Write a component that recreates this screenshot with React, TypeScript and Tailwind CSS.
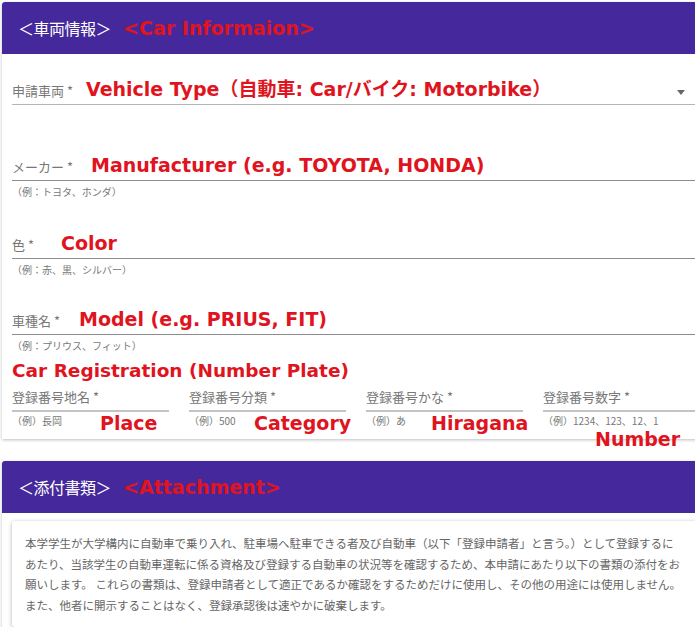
const jp = "font-['Meiryo','Noto_Sans_CJK_JP',sans-serif]";
const red = "font-['DejaVu_Sans','Noto_Sans_CJK_JP',sans-serif] font-bold text-[#e0141e]";

function Field({
  label,
  note,
  hint,
  noteGap,
  select,
}: {
  label: string;
  note: string;
  hint?: string;
  noteGap: string;
  select?: boolean;
}) {
  return (
    <div>
      <div
        className={`h-[26px] flex items-end pb-[3px] border-b ${
          select ? "border-[#b4b4b4]" : "border-[#8c8c8c]"
        }`}
      >
        <span className="text-[13px] leading-[20px] text-[#777]">{label}</span>
        <span className={`${red} text-[19px] leading-[24px] ${noteGap}`}>{note}</span>
        {select && (
          <span className="ml-auto mr-[12px] mb-[6px] w-0 h-0 border-l-[4px] border-r-[4px] border-t-[5px] border-l-transparent border-r-transparent border-t-[#666]" />
        )}
      </div>
      {hint && <div className="mt-[4px] text-[10px] leading-[14px] text-[#777]">{hint}</div>}
    </div>
  );
}

function PlateField({
  label,
  hint,
  note,
  hintWidth,
  last,
}: {
  label: string;
  hint: string;
  note: string;
  hintWidth?: string;
  last?: boolean;
}) {
  return (
    <div className="w-[157px] shrink-0">
      <div className="h-[26px] flex items-end pb-[3px] border-b-2 border-[#c4c4c4]">
        <span className="text-[13px] leading-[20px] text-[#777]">{label}</span>
      </div>
      {last ? (
        <div className="h-[18px]">
          <div className="text-[10px] leading-[18px] text-[#777]">{hint}</div>
          <div className={`${red} text-[19px] leading-[18px] ml-[52px]`}>{note}</div>
        </div>
      ) : (
        <div className="h-[18px] flex items-center">
          <span className={`text-[10px] leading-[18px] text-[#777] shrink-0 ${hintWidth}`}>{hint}</span>
          <span className={`${red} text-[19px] leading-[22px] mt-[4px] whitespace-nowrap`}>{note}</span>
        </div>
      )}
    </div>
  );
}

function Header({ jpTitle, enTitle }: { jpTitle: string; enTitle: string }) {
  return (
    <div className="h-[52px] bg-[#45289b] rounded-tl-[3px] flex items-center pl-[16px]">
      <span className="text-white text-[16px] tracking-[-0.5px]">{jpTitle}</span>
      <span className={`${red} text-[19px] ml-[12px]`}>{enTitle}</span>
    </div>
  );
}

export default function App() {
  return (
    <div className={`w-[695px] h-[627px] overflow-hidden bg-white ${jp}`}>
      <div className="w-[720px] pt-[2px] pl-[2px]">
        <section className="relative bg-white shadow-[0_1px_3px_rgba(0,0,0,0.25)]">
          <Header jpTitle="＜車両情報＞" enTitle="<Car Informaion>" />
          <div className="pl-[10px] pr-[23px] pt-[25px] pb-[9px]">
            <Field
              select
              label="申請車両 *"
              note="Vehicle Type（自動車: Car/バイク: Motorbike）"
              noteGap="ml-[13px]"
            />
            <div className="mt-[50px]">
              <Field
                label="メーカー *"
                note="Manufacturer (e.g. TOYOTA, HONDA)"
                hint="（例：トヨタ、ホンダ）"
                noteGap="ml-[18px]"
              />
            </div>
            <div className="mt-[34px]">
              <Field label="色 *" note="Color" hint="（例：赤、黒、シルバー）" noteGap="ml-[27px]" />
            </div>
            <div className="mt-[32px]">
              <Field
                label="車種名 *"
                note="Model (e.g. PRIUS, FIT)"
                hint="（例：プリウス、フィット）"
                noteGap="ml-[19px]"
              />
            </div>
            <div className={`${red} text-[18.5px] leading-[24px] mt-[6px]`}>Car Registration (Number Plate)</div>
            <div className="flex gap-[20px] mt-[3px]">
              <PlateField label="登録番号地名 *" hint="（例）長岡" note="Place" hintWidth="w-[88px]" />
              <PlateField label="登録番号分類 *" hint="（例）500" note="Category" hintWidth="w-[65px]" />
              <PlateField label="登録番号かな *" hint="（例）あ" note="Hiragana" hintWidth="w-[65px]" />
              <PlateField label="登録番号数字 *" hint="（例）1234、123、12、1" note="Number" last />
            </div>
          </div>
        </section>

        <section className="mt-[22px] bg-white shadow-[0_1px_3px_rgba(0,0,0,0.25)] pb-[8px]">
          <Header jpTitle="＜添付書類＞" enTitle="<Attachment>" />
          <div className="ml-[10px] mt-[8px] rounded-[3px] shadow-[0_1px_4px_rgba(0,0,0,0.3)] px-[13px] py-[12px]">
            <p className="text-[11.5px] leading-[20.5px] text-[#666] whitespace-nowrap">
              本学学生が大学構内に自動車で乗り入れ、駐車場へ駐車できる者及び自動車（以下「登録申請者」と言う。）として登録するに
              <br />
              あたり、当該学生の自動車運転に係る資格及び登録する自動車の状況等を確認するため、本申請にあたり以下の書類の添付をお
              <br />
              願いします。 これらの書類は、登録申請者として適正であるか確認をするためだけに使用し、その他の用途には使用しません。
              <br />
              また、他者に開示することはなく、登録承認後は速やかに破棄します。
            </p>
          </div>
        </section>
      </div>
    </div>
  );
}
